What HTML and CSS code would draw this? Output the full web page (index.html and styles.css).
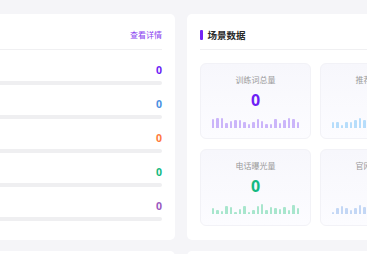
FILE: index.html
```
<!DOCTYPE html>
<html lang="zh-CN">
<head>
  <meta charset="UTF-8" />
  <meta name="viewport" content="width=device-width, initial-scale=1.0" />
  <title>数据看板</title>
  <link rel="stylesheet" href="styles.css">
</head>
<body>
  <div class="page">
    <div class="row">
      <div class="card overview">
        <div class="card-head">
          <span class="head-title"></span>
          <a class="more" href="#">查看详情</a>
        </div>
        <div class="stat-list">
          <div class="stat">
            <div class="stat-line"><b class="c-purple">0</b></div>
            <div class="track"></div>
          </div>
          <div class="stat">
            <div class="stat-line"><b class="c-blue">0</b></div>
            <div class="track"></div>
          </div>
          <div class="stat">
            <div class="stat-line"><b class="c-orange">0</b></div>
            <div class="track"></div>
          </div>
          <div class="stat">
            <div class="stat-line"><b class="c-green">0</b></div>
            <div class="track"></div>
          </div>
          <div class="stat">
            <div class="stat-line"><b class="c-violet">0</b></div>
            <div class="track"></div>
          </div>
        </div>
      </div>

      <div class="card scene">
        <div class="card-head">
          <span class="head-title"><i class="mark"></i>场景数据</span>
        </div>
        <div class="tiles">
          <div class="tile">
            <div class="tile-label">训练词总量</div>
            <div class="tile-num c-purple">0</div>
            <div class="spark purple" data-h="9,9.7,10,5.3,7.3,8.3,7.7,6,4.3,6.3,8.7,7,3.7,3.7,9,5.3,7.7,10,9,6"></div>
          </div>
          <div class="tile">
            <div class="tile-label">推荐词总量</div>
            <div class="tile-num c-blue">0</div>
            <div class="spark sky" data-h="5.7,5.7,3.3,5.7,5.7,8,10.3,8.3,6,4,7,9,5,6.5,8,4.5,7,9.5,6,5"></div>
          </div>
          <div class="tile">
            <div class="tile-label">电话曝光量</div>
            <div class="tile-num c-green">0</div>
            <div class="spark green" data-h="5.7,3.7,3,8.3,7,2.3,4.7,8.3,2.3,4.3,7.7,9.7,4,7.3,6.3,5.3,7,4,9,5.7"></div>
          </div>
          <div class="tile">
            <div class="tile-label">官网曝光量</div>
            <div class="tile-num c-blue">0</div>
            <div class="spark pale" data-h="2.3,6,8,6,4.3,6,8.7,7.3,5,3,7,8,4,6,9,5,7,3.5,8,6"></div>
          </div>
        </div>
      </div>
    </div>

    <div class="row bottom">
      <div class="card overview"></div>
      <div class="card scene"></div>
    </div>
  </div>

  <script>
    // build the little bar charts from the data-h lists
    document.querySelectorAll('.spark').forEach(function (el) {
      el.dataset.h.split(',').forEach(function (h) {
        const bar = document.createElement('span');
        bar.style.height = h + 'px';
        el.appendChild(bar);
      });
    });
  </script>
</body>
</html>
```

FILE: styles.css
```
html, body {
  margin: 0;
  padding: 0;
  overflow: hidden;
}
body {
  background: #f5f5f8;
  font-family: "PingFang SC", "Noto Sans CJK SC", "Noto Sans", sans-serif;
  color: #333;
}
.page {
  padding-top: 14px;
  margin-left: -120px;
}
.row {
  display: flex;
  gap: 12px;
  align-items: stretch;
}
.row.bottom {
  margin-top: 11px;
  height: 80px;
}
.card {
  background: #fff;
  border-radius: 5px;
  padding: 0 13px;
  flex: none;
}
.overview {
  width: 269px;
}
.scene {
  width: 240px;
}
.card-head {
  display: flex;
  justify-content: space-between;
  align-items: center;
  padding: 14px 0 8px;
  height: 13px;
  border-bottom: 1px solid #f0f0f2;
}
.head-title {
  display: flex;
  align-items: center;
  font-size: 9.5px;
  font-weight: 700;
  color: #2b2b2b;
}
.mark {
  display: inline-block;
  width: 2.5px;
  height: 10px;
  background: #7424f5;
  border-radius: 1px;
  margin-right: 5px;
}
.more {
  font-size: 8px;
  color: #8a3ff0;
  text-decoration: none;
}
.stat-list {
  padding: 13px 0 6px;
}
.stat-line {
  display: flex;
  justify-content: flex-end;
  align-items: center;
  height: 14px;
}
.stat-line b {
  font-family: "Noto Sans", sans-serif;
  font-size: 10.5px;
  font-weight: 700;
}
.track {
  height: 4px;
  margin: 4px 0 12px;
  border-radius: 2px;
  background: #efeff1;
}
.c-purple { color: #6d1ff5; }
.c-blue { color: #4a90e2; }
.c-orange { color: #ff7a3d; }
.c-green { color: #14b981; }
.c-violet { color: #9b5ac0; }

.tiles {
  display: grid;
  grid-template-columns: repeat(2, 111px);
  grid-template-rows: 76px 77px;
  column-gap: 9px;
  row-gap: 10px;
  padding: 13px 0 14px;
}
.tile {
  box-sizing: border-box;
  display: flex;
  flex-direction: column;
  align-items: center;
  padding: 11px 11px 0;
  border: 1px solid #f2f2f7;
  border-radius: 6px;
  background: linear-gradient(180deg, #f7f7fc 0%, #fcfcff 100%);
}
.tile-label {
  font-size: 8px;
  line-height: 10px;
  color: #999;
}
.tile-num {
  margin-top: 6px;
  font-family: "Noto Sans", sans-serif;
  font-size: 16px;
  line-height: 18px;
  font-weight: 700;
}
.spark {
  display: flex;
  align-items: flex-end;
  gap: 2px;
  height: 11px;
  margin-top: 8px;
  align-self: stretch;
}
.spark span {
  width: 2.5px;
  border-radius: 1px 1px 0 0;
}
.spark.purple span { background: #cbb5fa; }
.spark.sky span { background: #b6ddfb; }
.spark.green span { background: #a8e6cd; }
.spark.pale span { background: #c3d7f5; }
```
